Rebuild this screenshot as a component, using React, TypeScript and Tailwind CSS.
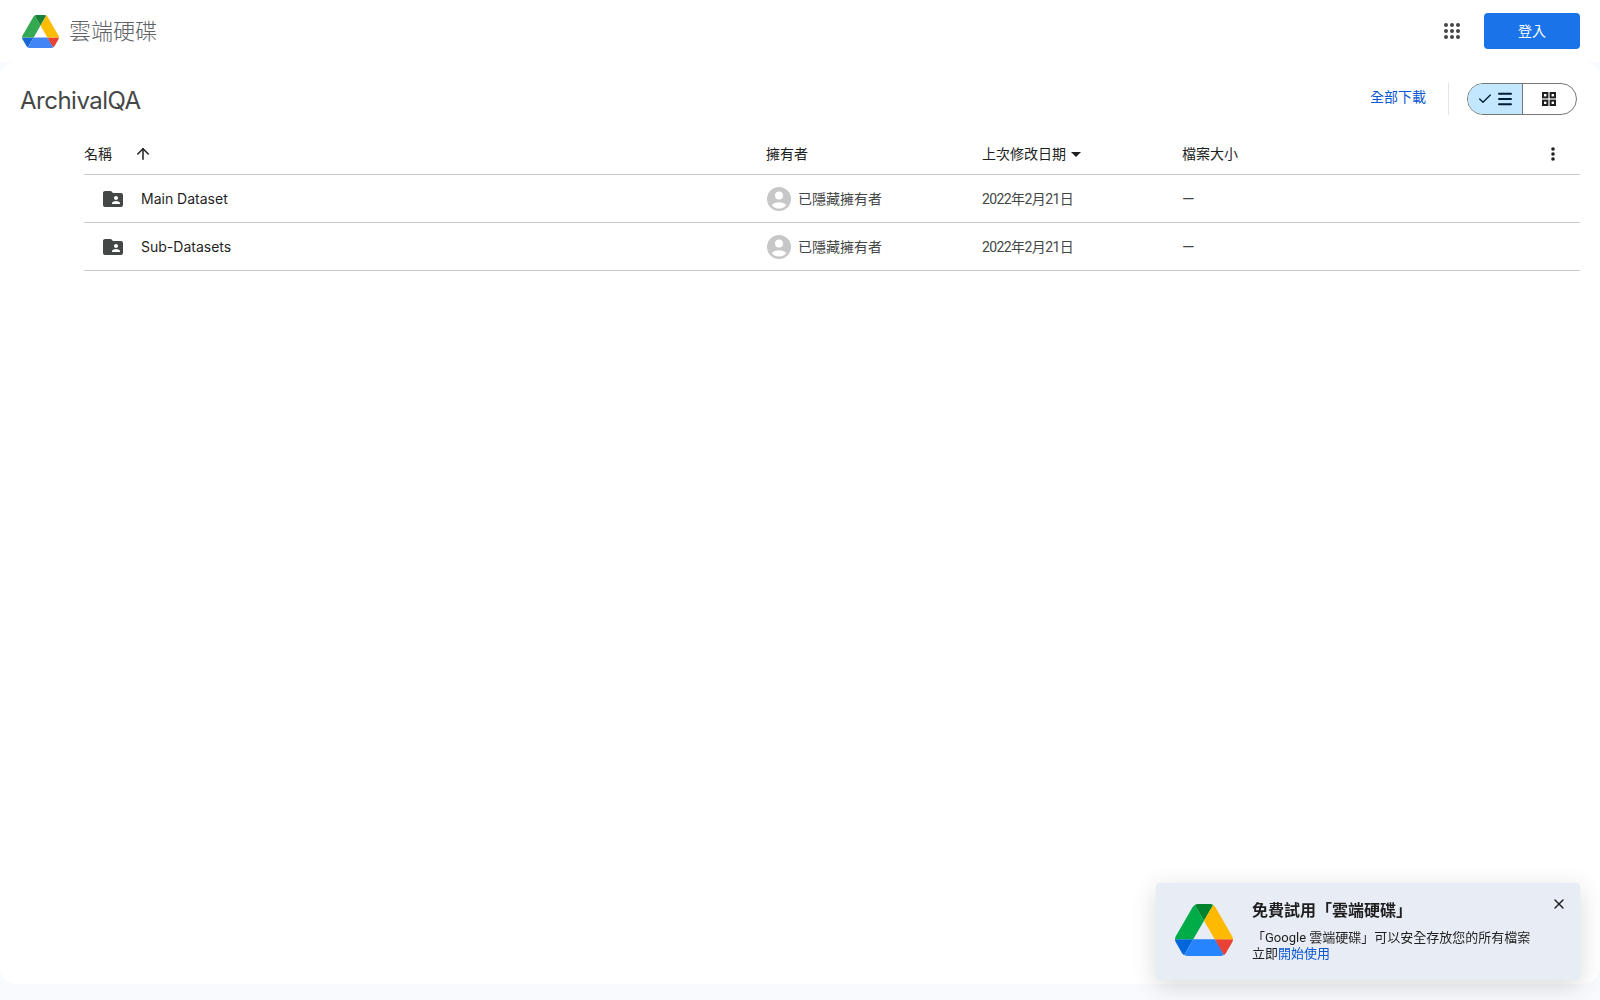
import { ArrowUp, Check, Menu, X } from 'lucide-react';

const sans = 'font-["Roboto","Noto_Sans_CJK_TC",sans-serif]';

function DriveLogo({ className, muted }: { className: string; muted?: boolean }) {
  return (
    <svg viewBox="0 0 87.3 78" className={className}>
      <path d="m6.6 66.85 3.85 6.65c.8 1.4 1.95 2.5 3.3 3.3l13.75-23.8h-27.5c0 1.55.4 3.1 1.2 4.5z" fill={muted ? '#1967d2' : '#0066da'} />
      <path d="m43.65 25-13.75-23.8c-1.35.8-2.5 1.9-3.3 3.3l-25.4 44a9.06 9.06 0 0 0 -1.2 4.5h27.5z" fill={muted ? '#34a853' : '#00ac47'} />
      <path d="m73.55 76.8c1.35-.8 2.5-1.9 3.3-3.3l1.6-2.75 7.65-13.25c.8-1.4 1.2-2.95 1.2-4.5h-27.502l5.852 11.5z" fill="#ea4335" />
      <path d="m43.65 25 13.75-23.8c-1.35-.8-2.9-1.2-4.5-1.2h-18.5c-1.6 0-3.15.45-4.5 1.2z" fill={muted ? '#188038' : '#00832d'} />
      <path d="m59.8 53h-32.3l-13.75 23.8c1.35.8 2.9 1.2 4.5 1.2h50.8c1.6 0 3.15-.45 4.5-1.2z" fill={muted ? '#4285f4' : '#2684fc'} />
      <path d="m73.4 26.5-12.7-22c-.8-1.4-1.95-2.5-3.3-3.3l-13.75 23.8 16.15 28h27.45c0-1.55-.4-3.1-1.2-4.5z" fill={muted ? '#fbbc04' : '#ffba00'} />
    </svg>
  );
}

function SharedFolder() {
  return (
    <svg viewBox="0 0 24 24" className="h-6 w-6 text-[#444746]" fill="currentColor">
      <path d="M20 6h-8l-2-2H4c-1.1 0-1.99.9-1.99 2L2 18c0 1.1.9 2 2 2h16c1.1 0 2-.9 2-2V8c0-1.1-.9-2-2-2zm-5 3c1.1 0 2 .9 2 2s-.9 2-2 2-2-.9-2-2 .9-2 2-2zm4 8h-8v-1c0-1.33 2.67-2 4-2s4 .67 4 2v1z" />
    </svg>
  );
}

function Avatar() {
  return (
    <svg viewBox="0 0 24 24" className="h-6 w-6 text-[#c7c7c7]" fill="currentColor">
      <path d="M12 0a12 12 0 1 0 0 24 12 12 0 0 0 0-24zm0 4.6a4 4 0 1 1 0 8 4 4 0 0 1 0-8zm0 17a9.4 9.4 0 0 1-7.2-3.4c.9-1.9 4.3-3 7.2-3s6.3 1.1 7.2 3a9.4 9.4 0 0 1-7.2 3.4z" />
    </svg>
  );
}

function Row({ name }: { name: string }) {
  return (
    <div className="grid h-12 grid-cols-[683px_215px_200px_1fr] items-center border-b border-[#c7c7c7]">
      <div className="flex items-center pl-[17px]">
        <SharedFolder />
        <span className="ml-[16px] font-['Inter'] text-[14px] font-normal text-[#1f1f1f]">{name}</span>
      </div>
      <div className="flex items-center">
        <Avatar />
        <span className="mt-[2px] ml-[7px] text-[14px] text-[#444746]">已隱藏擁有者</span>
      </div>
      <span className="mt-[2px] text-[14px] tracking-[-0.6px] text-[#444746]">2022年2月21日</span>
      <span className="mt-[2px] text-[16px] text-[#444746]">—</span>
    </div>
  );
}

export default function App() {
  return (
    <div className={`flex h-screen flex-col overflow-hidden bg-[#f8fafd] ${sans}`}>
      {/* Header */}
      <header className="flex h-[62px] shrink-0 items-center justify-between bg-white pr-5 pl-[22px]">
        <div className="flex items-center">
          <DriveLogo className="h-[33px] w-[37px]" muted />
          <span className="ml-[10px] text-[22px] font-light text-[#5f6368]">雲端硬碟</span>
        </div>
        <div className="flex items-center">
          <svg viewBox="0 0 16 16" className="mr-[24px] h-4 w-4 text-[#444746]" fill="currentColor">
            {[2, 8, 14].map(y => [2, 8, 14].map(x => <circle key={`${x}-${y}`} cx={x} cy={y} r="2" />))}
          </svg>
          <button className="h-9 w-24 rounded bg-[#1a73e8] text-[14px] text-white">登入</button>
        </div>
      </header>

      {/* Main card */}
      <main className="mb-4 flex-1 rounded-2xl bg-white">
        <div className="flex h-[74px] items-center justify-between pr-[23px] pl-5">
          <h1 className="mt-[4px] font-['Inter'] text-[24px] tracking-[-0.5px] text-[#444746]">ArchivalQA</h1>
          <div className="flex items-center">
            <a className="-mt-[4px] text-[14px] text-[#0b57d0]">全部下載</a>
            <div className="mr-[18px] ml-[22px] h-8 w-px bg-[#e3e3e3]" />
            <div className="flex h-8 w-[110px] overflow-hidden rounded-full border border-[#747775]">
              <div className="flex w-[55px] items-center justify-center gap-[3px] border-r border-[#747775] bg-[#c2e7ff] text-[#001d35]">
                <Check className="h-[16px] w-[16px]" strokeWidth={2} />
                <Menu className="h-[18px] w-[18px]" strokeWidth={2.6} />
              </div>
              <div className="flex flex-1 items-center justify-center pr-[2px]">
                <svg viewBox="0 0 16 16" className="h-4 w-4 text-[#1f1f1f]" fill="none" stroke="currentColor" strokeWidth="2">
                  <rect x="2" y="2" width="4.4" height="4.4" />
                  <rect x="9.6" y="2" width="4.4" height="4.4" />
                  <rect x="2" y="9.6" width="4.4" height="4.4" />
                  <rect x="9.6" y="9.6" width="4.4" height="4.4" />
                </svg>
              </div>
            </div>
          </div>
        </div>

        {/* File list */}
        <div className="mr-5 ml-[84px]">
          <div className="grid h-[39px] grid-cols-[683px_215px_200px_1fr] items-center border-b border-[#c7c7c7] pb-[2px] text-[14px] text-[#1f1f1f]">
            <div className="flex items-center">
              <span>名稱</span>
              <ArrowUp className="ml-[22px] h-[18px] w-[18px]" strokeWidth={2} />
            </div>
            <span className="-ml-px">擁有者</span>
            <div className="flex items-center">
              <span>上次修改日期</span>
              <svg viewBox="0 0 10 5" className="ml-[5px] h-[5px] w-[10px]" fill="currentColor">
                <path d="M0 0h10L5 5z" />
              </svg>
            </div>
            <div className="flex items-center justify-between pr-[25px]">
              <span>檔案大小</span>
              <svg viewBox="0 0 4 14" className="h-[14px] w-1" fill="currentColor">
                <circle cx="2" cy="2" r="1.8" />
                <circle cx="2" cy="7" r="1.8" />
                <circle cx="2" cy="12" r="1.8" />
              </svg>
            </div>
          </div>
          <Row name="Main Dataset" />
          <Row name="Sub-Datasets" />
        </div>
      </main>

      {/* Promo toast */}
      <div className="fixed right-5 bottom-5 flex h-[97px] w-[424px] items-start rounded-[4px] bg-[#e8ecf5] pt-[21px] pl-[19px] shadow-[0_6px_24px_rgba(60,64,67,0.2)]">
        <DriveLogo className="h-[52px] w-[58px] shrink-0" />
        <div className="-mt-[5px] ml-[19px]">
          <div className="text-[16px] leading-6 font-bold text-[#1f1f1f]">免費試用「雲端硬碟」</div>
          <div className="mt-[7px] text-[13px] leading-4 text-[#1f1f1f]">
            「Google 雲端硬碟」可以安全存放您的所有檔案
            <br />
            立即<a className="text-[#0b57d0]">開始使用</a>
          </div>
        </div>
        <X className="absolute top-[13px] right-[13px] h-[16px] w-[16px] text-[#1f1f1f]" strokeWidth={2} />
      </div>
    </div>
  );
}
